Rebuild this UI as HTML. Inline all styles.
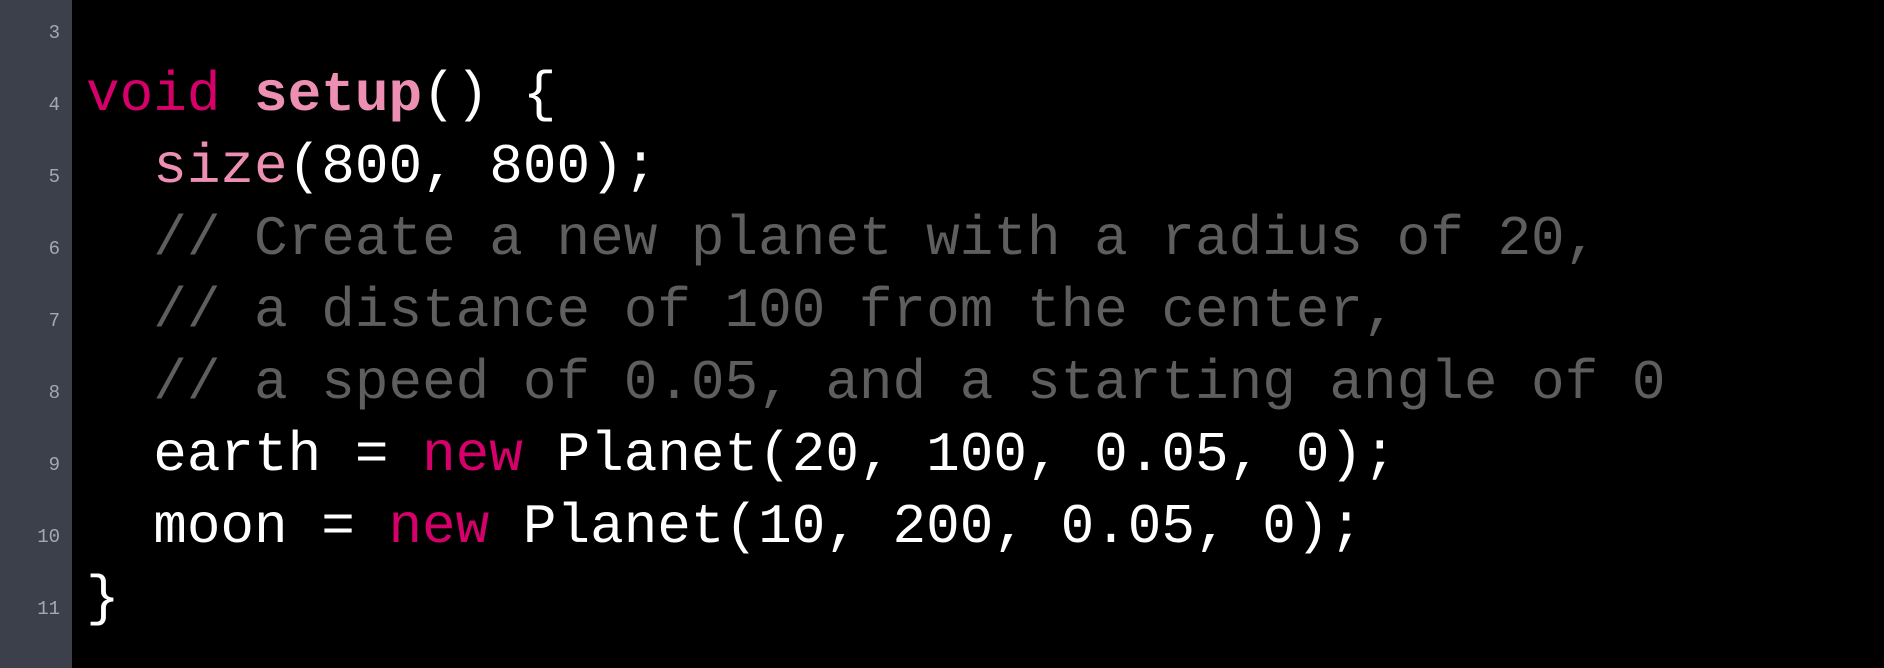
<!DOCTYPE html>
<html><head><meta charset="utf-8">
<style>
html,body{margin:0;padding:0;background:#000;width:1884px;height:668px;overflow:hidden;}
.gutter{position:absolute;left:0;top:0;width:72px;height:668px;background:#3c404b;}
.code{position:absolute;left:0;top:-13px;font-family:"Liberation Mono",monospace;font-size:56px;color:#fff;}
.l{height:72px;line-height:72px;white-space:pre;}
.n{display:inline-block;width:60px;text-align:right;font-size:19px;color:#a4a8b0;margin-right:26px;}
.k{color:#d6006a;}
.f{color:#ec8fb3;font-weight:bold;}
.p{color:#ec8fb3;}
.c{color:#5e5e5e;}
</style></head><body>
<div class="gutter"></div>
<div class="code"><div class="l"><span class="n">3</span></div><div class="l"><span class="n">4</span><span class="k">void</span> <span class="f">setup</span>() {</div><div class="l"><span class="n">5</span>  <span class="p">size</span>(800, 800);</div><div class="l"><span class="n">6</span>  <span class="c">// Create a new planet with a radius of 20,</span></div><div class="l"><span class="n">7</span>  <span class="c">// a distance of 100 from the center,</span></div><div class="l"><span class="n">8</span>  <span class="c">// a speed of 0.05, and a starting angle of 0</span></div><div class="l"><span class="n">9</span>  earth = <span class="k">new</span> Planet(20, 100, 0.05, 0);</div><div class="l"><span class="n">10</span>  moon = <span class="k">new</span> Planet(10, 200, 0.05, 0);</div><div class="l"><span class="n">11</span>}</div></div>
</body></html>
